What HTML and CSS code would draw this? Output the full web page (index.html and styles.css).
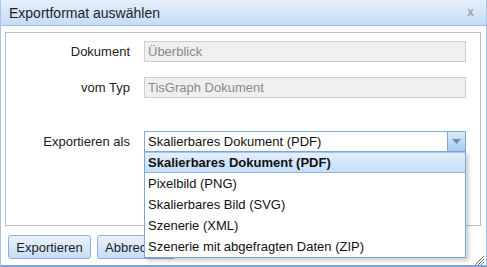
FILE: index.html
```html
<!DOCTYPE html>
<html lang="de">
<head>
    <meta charset="UTF-8">
    <title>Exportformat auswählen</title>
    <link rel="stylesheet" href="styles.css">
</head>
<body>
    <div class="window">
        <div class="window-header">
            <span class="window-title">Exportformat auswählen</span>
            <span class="window-close">x</span>
        </div>
        <div class="window-body">
            <div class="form-panel">
                <div class="form-row">
                    <label class="form-label">Dokument</label>
                    <div class="field field-disabled">Überblick</div>
                </div>
                <div class="form-row">
                    <label class="form-label">vom Typ</label>
                    <div class="field field-disabled">TisGraph Dokument</div>
                </div>
                <div class="form-row form-row-combo">
                    <label class="form-label">Exportieren als</label>
                    <div class="combo">
                        <div class="field combo-input">Skalierbares Dokument (PDF)</div>
                        <div class="combo-trigger">
                            <svg width="9" height="5" viewBox="0 0 9 5"><path d="M0 0h9L4.5 5z" fill="#6b8fb8"/></svg>
                        </div>
                        <ul class="combo-list">
                            <li class="combo-item selected">Skalierbares Dokument (PDF)</li>
                            <li class="combo-item">Pixelbild (PNG)</li>
                            <li class="combo-item">Skalierbares Bild (SVG)</li>
                            <li class="combo-item">Szenerie (XML)</li>
                            <li class="combo-item">Szenerie mit abgefragten Daten (ZIP)</li>
                        </ul>
                    </div>
                </div>
            </div>
            <div class="button-bar">
                <button class="btn btn-export">Exportieren</button>
                <button class="btn btn-cancel">Abbrechen</button>
            </div>
        </div>
        <div class="resize-grip">
            <svg width="11" height="11" viewBox="0 0 11 11">
                <path d="M10 1L1 10M10 4L4 10M10 7L7 10" stroke="#6d6d6d" stroke-width="1"/>
            </svg>
        </div>
    </div>
</body>
</html>
```

FILE: styles.css
```css
body {
    margin: 0;
    font-family: 'Liberation Sans', Arial, sans-serif;
    font-size: 13px;
    color: #222222;
    background-color: #ffffff;
}

.window {
    position: relative;
    width: 487px;
    height: 267px;
    box-sizing: border-box;
    border: 1px solid #a9c5e6;
    border-top: none;
    border-bottom: 2px solid #7ea6d4;
    background-color: #ffffff;
}

.window-header {
    display: flex;
    align-items: center;
    justify-content: space-between;
    height: 25px;
    padding: 0 12px 0 8px;
    border-bottom: 1px solid #99bbe8;
    background: linear-gradient(to bottom, #e4effb, #c6ddf6);
}

.window-title {
    font-size: 14px;
    color: #1f1f1f;
}

.window-close {
    font-size: 12px;
    font-weight: bold;
    color: #9aa8b8;
    margin-top: -2px;
}

.window-body {
    padding: 6px 4px 0 4px;
}

.form-panel {
    width: 476px;
    height: 194px;
    box-sizing: border-box;
    border: 1px solid #b9bfcc;
    padding: 8px 0 0 0;
}

.form-row {
    display: flex;
    align-items: center;
    height: 21px;
    margin-bottom: 15px;
}

.form-row-combo {
    margin-top: 33px;
}

.form-label {
    width: 124px;
    text-align: right;
    margin-right: 14px;
    color: #222222;
}

.field {
    width: 322px;
    height: 21px;
    box-sizing: border-box;
    padding: 0 3px;
    line-height: 19px;
    border: 1px solid #b5b8c8;
}

.field-disabled {
    background-color: #efefef;
    border-color: #cfcfcf;
    color: #8a8a8a;
}

.combo {
    position: relative;
    display: flex;
    width: 322px;
}

.combo-input {
    width: 303px;
    border-color: #7eaad6;
    border-right: none;
    color: #111111;
}

.combo-trigger {
    display: flex;
    align-items: center;
    justify-content: center;
    width: 19px;
    height: 21px;
    box-sizing: border-box;
    border: 1px solid #7eaad6;
    background: linear-gradient(to bottom, #dbe9f8, #a8cbf0);
}

.combo-list {
    position: absolute;
    top: 20px;
    left: 0;
    width: 322px;
    box-sizing: border-box;
    margin: 0;
    padding: 0;
    list-style: none;
    background-color: #ffffff;
    border: 1px solid #7ea6d4;
    box-shadow: 3px 3px 4px rgba(0, 0, 0, 0.18);
    z-index: 2;
}

.combo-item {
    height: 21px;
    line-height: 21px;
    padding: 0 3px;
    color: #111111;
    white-space: nowrap;
}

.combo-item.selected {
    height: 19px;
    line-height: 19px;
    font-weight: bold;
    border-top: 1px solid #a3c4ea;
    border-bottom: 1px solid #8fb5e0;
    background: linear-gradient(to bottom, #e3effc, #c4ddf7);
}

.button-bar {
    display: flex;
    gap: 6px;
    margin-top: 9px;
    padding-left: 3px;
}

.btn {
    height: 24px;
    padding: 0 7px;
    font-family: 'Liberation Sans', Arial, sans-serif;
    font-size: 13px;
    color: #222222;
    border: 1px solid #8cb0da;
    border-radius: 3px;
    background: linear-gradient(to bottom, #eaf2fc, #c6dcf4);
}

.btn-export {
    width: 83px;
}

.btn-cancel {
    width: 79px;
}

.resize-grip {
    position: absolute;
    right: 1px;
    bottom: 0;
    width: 11px;
    height: 11px;
}
```
